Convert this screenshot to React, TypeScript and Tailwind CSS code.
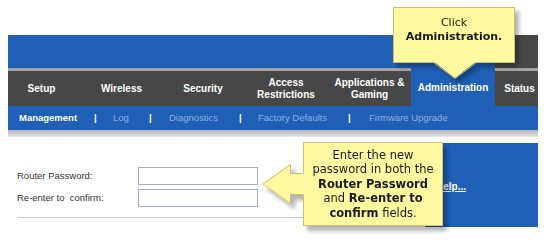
import React from "react";

const BLUE = "bg-[#1f5fb5]";

function Tab({ label, w, extra = "" }: { label: React.ReactNode; w: string; extra?: string }) {
  return (
    <div
      className={`${w} ${extra} flex items-center justify-center border-t-[3px] border-[#a4a4a4] bg-[#474747] text-center text-[10px] font-bold leading-[12px] text-white`}
    >
      {label}
    </div>
  );
}

export default function App() {
  return (
    <div
      className="relative h-[242px] w-[546px] overflow-hidden bg-white"
      style={{ fontFamily: '"Liberation Sans", Arial, sans-serif' }}
    >
      <div className="h-[35px]" />
      <div className="ml-[8px] w-[530px]">
        {/* top band */}
        <div className="flex h-[33px]">
          <div className={`flex-1 ${BLUE}`} />
          <div className="w-[43px] bg-[#474747]" />
        </div>
        {/* tabs */}
        <div className="flex h-[38px]">
          <Tab label="Setup" w="w-[73px]" extra="pr-[6px]" />
          <Tab label="Wireless" w="w-[81px]" />
          <Tab label="Security" w="w-[82px]" />
          <Tab label={<span>Access<br />Restrictions</span>} w="w-[84px]" />
          <Tab label={<span>Applications &amp;<br />Gaming</span>} w="w-[83px]" />
          <div className={`flex w-[84px] items-center justify-center ${BLUE} text-[10px] font-bold text-white`}>
            Administration
          </div>
          <Tab label="Status" w="flex-1" extra="pl-[6px]" />
        </div>
        {/* sub nav */}
        <div className={`flex h-[24px] items-center ${BLUE} text-[9.5px] text-[#8fb0e2]`}>
          <span className="ml-[11px] w-[75px] font-bold text-white">Management</span>
          <span className="w-[19px] font-bold text-white">|</span>
          <span className="w-[36px]">Log</span>
          <span className="w-[20px] font-bold text-white">|</span>
          <span className="w-[70px]">Diagnostics</span>
          <span className="w-[19px] font-bold text-white">|</span>
          <span className="w-[90px]">Factory Defaults</span>
          <span className="w-[21px] font-bold text-white">|</span>
          <span>Firmware Upgrade</span>
        </div>
        <div className="h-[7px] bg-linear-to-b from-[#b4b4b4] to-[#e8e8e8]" />
        {/* content */}
        <div className="flex">
          <div className="flex-1 pl-[9px] pt-[30px]">
            <div className="flex flex-col gap-[4px] text-[9.5px] text-[#333]">
              <div className="flex items-center">
                <span className="w-[121px]">Router Password:</span>
                <div className="h-[18px] w-[120px] border border-[#9fb0c6] bg-white" />
              </div>
              <div className="flex items-center">
                <span className="w-[121px]">Re-enter to&nbsp; confirm:</span>
                <div className="h-[18px] w-[120px] border border-[#9fb0c6] bg-white" />
              </div>
            </div>
            <div className="mt-[10px] h-px bg-[#c4c7da]" />
          </div>
          <div className={`mt-[6px] h-[84px] w-[113px] ${BLUE} pl-[11px] pt-[30px]`}>
            <span className="text-[10px] font-bold text-white underline">Help...</span>
          </div>
        </div>
      </div>

      {/* callout 1 */}
      <div className="absolute left-[393px] top-[7px] h-[74px] w-[123px] drop-shadow-[4px_4px_2px_rgba(0,0,0,0.3)]">
        <div
          className="absolute left-0 top-0 flex h-[56px] w-[122px] flex-col items-center justify-start border border-[#c9c07c] bg-[#fff9a0] pt-[8px] text-[11px] leading-[14px] text-[#1a1a1a]"
          style={{ fontFamily: '"DejaVu Sans", Verdana, sans-serif' }}
        >
          <span>Click</span>
          <span className="font-bold">Administration.</span>
        </div>
        <svg className="absolute left-[40px] top-[54px]" width="46" height="20" viewBox="0 0 46 20">
          <path d="M0,0 L22,17 L44,0 Z" fill="#fff9a0" />
          <path d="M0.5,1.5 L22,17.5 L43.5,1.5" fill="none" stroke="#c9c07c" strokeWidth="1" />
        </svg>
      </div>

      {/* callout 2 */}
      <div className="absolute left-[262px] top-[142px] h-[86px] w-[182px] drop-shadow-[4px_5px_2px_rgba(0,0,0,0.3)]">
        <div
          className="absolute left-[41px] top-0 flex h-[84px] w-[140px] flex-col items-center justify-center border border-[#c9c07c] bg-[#fff9a0] text-center text-[11.5px] leading-[14.5px] text-[#1a1a1a]"
          style={{ fontFamily: '"DejaVu Sans", Verdana, sans-serif' }}
        >
          <span>Enter the new</span>
          <span>password in both the</span>
          <span className="font-bold">Router Password</span>
          <span>
            and <b>Re-enter to</b>
          </span>
          <span>
            <b>confirm</b> fields.
          </span>
        </div>
        <svg className="absolute left-0 top-0" width="44" height="86" viewBox="0 0 44 86">
          <path d="M43,31 L28,31 L28,22 L0.5,42 L28,62 L28,53 L43,53 Z" fill="#fff9a0" />
          <path
            d="M41.5,31.5 L28.5,31.5 L28.5,22.5 L1,42 L28.5,61.5 L28.5,52.5 L41.5,52.5"
            fill="none"
            stroke="#c9c07c"
            strokeWidth="1"
          />
        </svg>
      </div>
    </div>
  );
}
